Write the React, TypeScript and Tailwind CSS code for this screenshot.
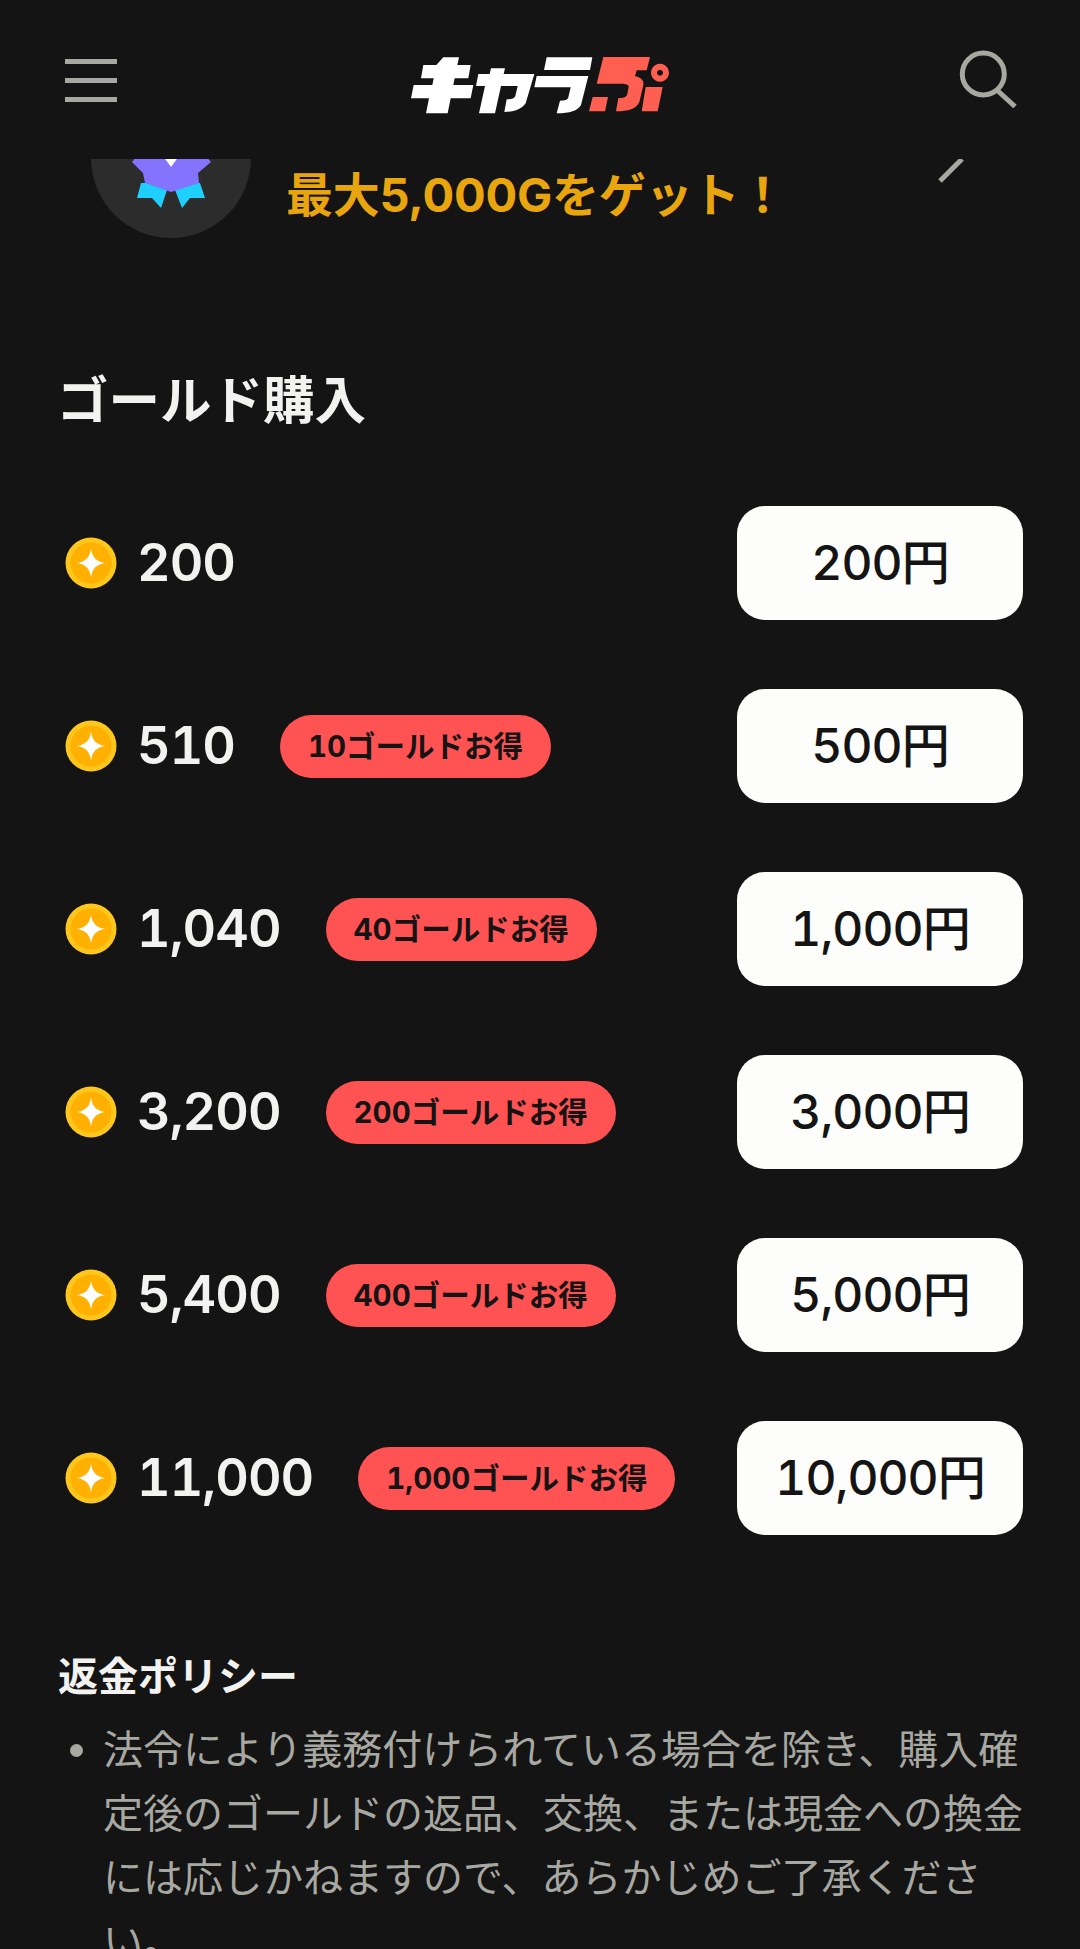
const rows = [
  { amount: "200", price: "200円" },
  { amount: "510", bonus: "10ゴールドお得", price: "500円" },
  { amount: "1,040", bonus: "40ゴールドお得", price: "1,000円" },
  { amount: "3,200", bonus: "200ゴールドお得", price: "3,000円" },
  { amount: "5,400", bonus: "400ゴールドお得", price: "5,000円" },
  { amount: "11,000", bonus: "1,000ゴールドお得", price: "10,000円" },
];

function Logo() {
  return (
    <svg role="img" aria-label="キャラぷ" width="270" height="70" viewBox="0 0 810 210">
      <g fill="#ffffff">
        <path d="M115 22H162L157 45H197L190 85H149L145 105H205L197 145H137L128 190H63L72 145H18L26 105H82L86 85H48L55 45H94Z" />
        <path d="M258 55H300L296 72H388L362 160C350 178 325 186 298 186L305 148C320 148 328 146 331 138L338 108H288L270 190H222L240 108H213L220 72H254Z" />
        <path d="M425 22H562L555 60H417ZM395 78H550L528 165C518 182 495 190 455 190L465 152C480 152 488 150 490 142L497 112H388Z" />
      </g>
      <g fill="#ff5f50" transform="translate(405 0)">
        <path d="M190 21H330L320 61H290L285 78C305 84 312 91 310 106L298 156C290 176 265 184 228 184L235 144C252 144 260 141 262 131L266 111C266 104 258 101 245 101H170Z" />
        <path d="M158 141H204L195 184H147Z" />
        <path d="M317 111H368L353 184H305Z" />
        <path fillRule="evenodd" d="M360 41A27 27 0 1 1 359.9 41ZM360 59A9 9 0 1 0 360.1 59Z" />
      </g>
    </svg>
  );
}

function Coin() {
  return (
    <svg className="shrink-0" width="52" height="52" viewBox="0 0 52 52">
      <circle cx="26" cy="26" r="25.5" fill="#ffc71c" />
      <circle cx="26" cy="26" r="20.5" fill="#ffb000" />
      <path d="M26 11.5C27.2 20.5 31.5 24.8 40.5 26C31.5 27.2 27.2 31.5 26 40.5C24.8 31.5 20.5 27.2 11.5 26C20.5 24.8 24.8 20.5 26 11.5Z" fill="#ffffff" />
    </svg>
  );
}

export default function App() {
  return (
    <div className="h-[1949px] w-[1080px] overflow-hidden bg-[#141414] font-['Inter','Noto_Sans_CJK_JP',sans-serif] text-[#f2f2f0]">
      <header className="flex h-[159px] items-start">
        <div className="ml-[65px] mt-[59px] flex w-[52px] flex-col gap-[14px]">
          <div className="h-[5px] bg-[#a8a8a2]" />
          <div className="h-[5px] bg-[#a8a8a2]" />
          <div className="h-[5px] bg-[#a8a8a2]" />
        </div>
        <div className="ml-[288px] mt-[50px]">
          <Logo />
        </div>
        <svg className="ml-[284px] mt-[50px]" width="58" height="58" viewBox="0 0 58 58" fill="none" stroke="#a8a8a2" strokeWidth="5">
          <circle cx="24.3" cy="24" r="21" />
          <path d="M39 41L56 56.5" />
        </svg>
      </header>

      <section className="flex h-[91px] overflow-hidden pl-[91px]">
        <div className="-mt-[81px] h-[160px] w-[160px] shrink-0 overflow-hidden rounded-full bg-[#2c2c2c]">
          <svg width="160" height="160" viewBox="0 0 160 160">
            <path d="M50 105L46 120H61L70 130L76 112H84L91 130L99 120H114L109 105Z" fill="#1fd0ff" />
            <path d="M41 84L52 70H108L120 84L107 95L108 105L80 114L54 105L52 95Z" fill="#8473ff" />
            <path d="M72 78H88L80 89Z" fill="#ffffff" />
          </svg>
        </div>
        <p className="ml-[35px] mt-[8px] text-[47px] leading-[56px] font-bold tracking-[-0.2px] whitespace-nowrap text-[#e8a50d]">
          最大5,000Gをゲット！
        </p>
        <svg className="ml-[152px]" width="26" height="24" viewBox="0 0 26 24" fill="none" stroke="#a8a8a2" strokeWidth="5">
          <path d="M2 22L24 0" />
        </svg>
      </section>

      <h2 className="ml-[57px] mt-[120px] text-[51.5px] leading-[60px] font-bold">ゴールド購入</h2>

      <div className="mt-[76px] flex flex-col gap-[69px]">
        {rows.map((row) => (
          <div key={row.amount} className="flex h-[114px] items-center pl-[65px] pr-[57px]">
            <Coin />
            <span className="ml-[20px] text-[52px] leading-none font-semibold tracking-[-1px] tabular-nums">{row.amount}</span>
            {row.bonus && (
              <span className="ml-[45px] flex h-[63px] items-center rounded-full bg-[#ff5252] px-[28px] text-[29.5px] font-bold whitespace-nowrap text-[#141414] tabular-nums">
                {row.bonus}
              </span>
            )}
            <button className="ml-auto flex h-[114px] w-[286px] items-center justify-center rounded-[28px] bg-[#fdfdfb] text-[48px] font-medium tracking-[-1px] text-[#141414] tabular-nums">
              {row.price}
            </button>
          </div>
        ))}
      </div>

      <h3 className="ml-[58px] mt-[118px] text-[40px] leading-[48px] font-bold">返金ポリシー</h3>
      <ul className="mt-[17px] flex pl-[70px]">
        <li className="flex">
          <span className="mt-[26px] h-[13px] w-[13px] shrink-0 rounded-full bg-[#a8a8a2]" />
          <span className="ml-[20px] w-[921px] text-[40px] leading-[64px] text-[#a8a8a2]">
            法令により義務付けられている場合を除き、購入確定後のゴールドの返品、交換、または現金への換金には応じかねますので、あらかじめご了承ください。
          </span>
        </li>
      </ul>
    </div>
  );
}
